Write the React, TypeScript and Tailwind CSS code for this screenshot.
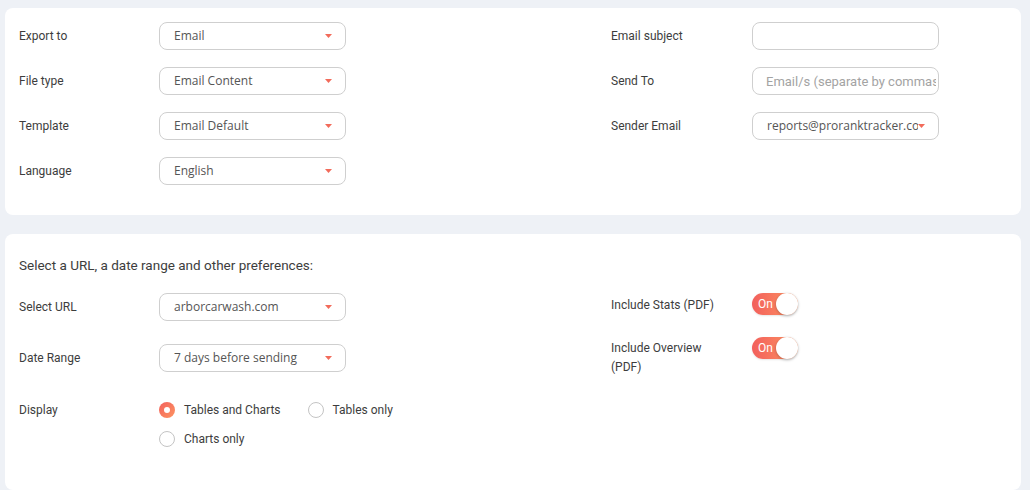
import React, { useState } from 'react';

const labelCls = 'text-[12px] text-[#3d3d3d]';
const selectFont = { fontFamily: '"Open Sans", "Noto Sans", sans-serif' };

const Caret = () => (
  <svg width="7" height="4" viewBox="0 0 7 4" className="shrink-0">
    <path d="M0 0h7L3.5 4z" fill="#f26b5b" />
  </svg>
);

const FakeSelect: React.FC<{ value: string }> = ({ value }) => (
  <div className="w-[187px] h-[28px] rounded-[8px] border border-[#cfcfcf] bg-white flex items-center pl-[14px] pr-[13px]">
    <span className="flex-1 truncate text-[12px] text-[#555]" style={selectFont}>
      {value}
    </span>
    <Caret />
  </div>
);

const Row: React.FC<{ label: string; w?: string; children: React.ReactNode }> = ({ label, w = 'w-[140px]', children }) => (
  <div className="flex items-center h-[28px]">
    <div className={`${w} ${labelCls}`}>{label}</div>
    {children}
  </div>
);

const Toggle: React.FC<{ on: boolean; onClick: () => void }> = ({ on, onClick }) => (
  <button
    onClick={onClick}
    className={`relative w-[46px] h-[22px] rounded-full flex items-center shadow-[0_1px_2px_rgba(0,0,0,0.1)] ${
      on ? 'bg-gradient-to-r from-[#f25f5c] to-[#fd9461]' : 'bg-[#d6d6d6]'
    }`}
  >
    <span className="absolute left-[6px] text-[12px] text-white leading-none" style={{ fontFamily: 'Roboto, sans-serif' }}>
      {on ? 'On' : ''}
    </span>
    <span
      className={`absolute top-0 h-[22px] w-[22px] rounded-full bg-white shadow-[0_1px_3px_rgba(0,0,0,0.25)] ${
        on ? 'right-0' : 'left-0'
      }`}
    />
  </button>
);

const Radio: React.FC<{ checked: boolean; label: string; onClick: () => void }> = ({ checked, label, onClick }) => (
  <label onClick={onClick} className="flex items-center gap-[9px] cursor-pointer h-[18px]">
    {checked ? (
      <span className="w-[16px] h-[16px] rounded-full bg-gradient-to-br from-[#f25f5c] to-[#fd9461] flex items-center justify-center">
        <span className="w-[6px] h-[6px] rounded-full bg-white" />
      </span>
    ) : (
      <span className="w-[16px] h-[16px] rounded-full border border-[#c4c4c4] bg-white" />
    )}
    <span className={`${labelCls} leading-[18px]`}>{label}</span>
  </label>
);

export default function App() {
  const [stats, setStats] = useState(true);
  const [overview, setOverview] = useState(true);
  const [display, setDisplay] = useState('both');

  return (
    <div
      className="min-h-screen bg-[#eef1f6] pl-[5px] pr-[9px] pt-[8px] pb-[6px] flex flex-col gap-[19px]"
      style={{ fontFamily: 'Roboto, "Liberation Sans", sans-serif' }}
    >
      <div className="bg-white rounded-[8px] pl-[14px] pt-[14px] pb-[30px] flex">
        <div className="w-[592px] flex flex-col gap-[17px]">
          <Row label="Export to"><FakeSelect value="Email" /></Row>
          <Row label="File type"><FakeSelect value="Email Content" /></Row>
          <Row label="Template"><FakeSelect value="Email Default" /></Row>
          <Row label="Language"><FakeSelect value="English" /></Row>
        </div>
        <div className="flex flex-col gap-[17px]">
          <Row label="Email subject" w="w-[141px]">
            <input className="w-[187px] h-[28px] rounded-[8px] border border-[#cfcfcf] bg-white px-[14px] text-[12px] outline-none" />
          </Row>
          <Row label="Send To" w="w-[141px]">
            <input
              placeholder="Email/s (separate by commas)"
              className="w-[187px] h-[28px] rounded-[8px] border border-[#cfcfcf] bg-white pl-[13px] pr-[2px] text-[13px] text-[#555] placeholder:text-[#a3a3a3] outline-none"
            />
          </Row>
          <Row label="Sender Email" w="w-[141px]">
            <div className="w-[187px] h-[28px] rounded-[8px] border border-[#cfcfcf] bg-white flex items-center pl-[14px] pr-[13px]">
              <span className="flex-1 overflow-hidden whitespace-nowrap text-[12px] text-[#555]" style={selectFont}>
                reports@proranktracker.com
              </span>
              <Caret />
            </div>
          </Row>
        </div>
      </div>

      <div className="bg-white rounded-[8px] pl-[14px] pt-[21px] pb-[42px]">
        <div className="text-[13.5px] text-[#3d3d3d] leading-[20px] mb-[18px]">
          Select a URL, a date range and other preferences:
        </div>
        <div className="flex">
          <div className="w-[592px] flex flex-col">
            <Row label="Select URL"><FakeSelect value="arborcarwash.com" /></Row>
            <div className="h-[23px]" />
            <Row label="Date Range"><FakeSelect value="7 days before sending" /></Row>
            <div className="h-[28px]" />
            <div className="flex">
              <div className={`w-[140px] ${labelCls} leading-[20px]`}>Display</div>
              <div className="flex flex-col gap-[11px] pt-[1px]">
                <div className="flex gap-[27px]">
                  <Radio checked={display === 'both'} label="Tables and Charts" onClick={() => setDisplay('both')} />
                  <Radio checked={display === 'tables'} label="Tables only" onClick={() => setDisplay('tables')} />
                </div>
                <Radio checked={display === 'charts'} label="Charts only" onClick={() => setDisplay('charts')} />
              </div>
            </div>
          </div>
          <div className="flex flex-col gap-[22px]">
            <div className="flex items-start">
              <div className={`w-[141px] ${labelCls} leading-[19px] pt-[3px]`}>Include Stats (PDF)</div>
              <Toggle on={stats} onClick={() => setStats(!stats)} />
            </div>
            <div className="flex items-start">
              <div className={`w-[141px] ${labelCls} leading-[19px] pt-[2px]`}>
                Include Overview
                <br />
                (PDF)
              </div>
              <Toggle on={overview} onClick={() => setOverview(!overview)} />
            </div>
          </div>
        </div>
      </div>
    </div>
  );
}
